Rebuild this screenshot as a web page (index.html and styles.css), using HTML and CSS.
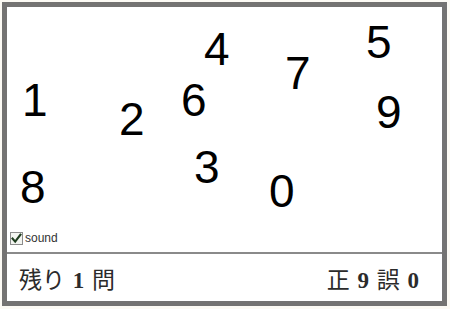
FILE: index.html
```html
<!DOCTYPE html>
<html lang="ja">
<head>
<meta charset="utf-8">
<title>数字タッチ</title>
<link rel="stylesheet" href="styles.css">
</head>
<body>
<div class="frame">
  <div class="board">
    <span class="num" style="left:15px;top:70px">1</span>
    <span class="num" style="left:112px;top:89px">2</span>
    <span class="num" style="left:13px;top:157px">8</span>
    <span class="num" style="left:174px;top:70px">6</span>
    <span class="num" style="left:197px;top:19px">4</span>
    <span class="num" style="left:278px;top:43px">7</span>
    <span class="num" style="left:359px;top:12px">5</span>
    <span class="num" style="left:369px;top:82px">9</span>
    <span class="num" style="left:187px;top:137px">3</span>
    <span class="num" style="left:262px;top:161px">0</span>
    <label class="sound">
      <svg class="check" width="13" height="13" viewBox="0 0 13 13" aria-hidden="true">
        <rect x="0.5" y="0.5" width="12" height="12" fill="#f3f5f1" stroke="#8c8c8c"/>
        <path d="M2.6 6.6 L5.2 9.6 L10.4 2.8" fill="none" stroke="#1f3d1f" stroke-width="2.2" stroke-linecap="square"/>
      </svg>
      <span class="sound-text">sound</span>
    </label>
  </div>
  <div class="status">
    <span class="remain">残り <span class="digit">1</span> 問</span>
    <span class="score">正 <span class="digit">9</span> 誤 <span class="digit">0</span></span>
  </div>
</div>
</body>
</html>
```
FILE: styles.css
```css
html, body {
  margin: 0;
  padding: 0;
}
body {
  background: #fcfaf4;
  width: 450px;
  height: 309px;
  overflow: hidden;
}
.frame {
  margin: 2px 0 0 2px;
  width: 435px;
  height: 294px;
  border: 5px solid #747372;
  background: #ffffff;
  display: flex;
  flex-direction: column;
}
.board {
  position: relative;
  height: 245px;
  display: flex;
  flex-direction: column;
  justify-content: flex-end;
  padding: 0 0 7px 3px;
  box-sizing: border-box;
}
.num {
  position: absolute;
  font-family: "Liberation Sans", Arial, sans-serif;
  font-size: 46px;
  line-height: 46px;
  color: #000;
}
.sound {
  display: flex;
  align-items: center;
  gap: 2px;
  height: 13px;
  font-family: "Liberation Sans", Arial, sans-serif;
  font-size: 12px;
  color: #333;
}
.check {
  display: block;
}
.sound-text {
  line-height: 13px;
}
.status {
  flex: 1;
  border-top: 2px solid #8a8a8a;
  display: flex;
  align-items: center;
  justify-content: space-between;
  padding: 0 23px 0 12px;
  font-family: "Liberation Serif", "Noto Sans CJK JP", serif;
  font-size: 23px;
  word-spacing: 2px;
  color: #2b2b2b;
}
.digit {
  font-weight: 600;
}
```
